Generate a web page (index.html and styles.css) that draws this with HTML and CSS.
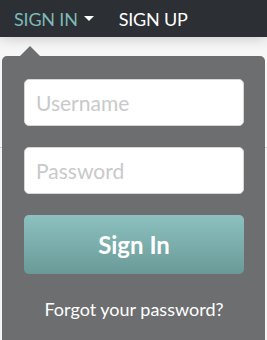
FILE: index.html
```html
<!DOCTYPE html>
<html lang="en">
<head>
  <meta charset="UTF-8">
  <meta name="viewport" content="width=device-width, initial-scale=1.0">
  <title>Sign In</title>
  <link rel="stylesheet" href="styles.css">
</head>
<body>
  <!-- Top bar -->
  <nav class="topbar">
    <a class="nav-link active" href="#">SIGN IN <span class="caret"></span></a>
    <a class="nav-link" href="#">SIGN UP</a>
  </nav>

  <!-- Page behind the dropdown -->
  <div class="page"></div>

  <!-- Sign in dropdown -->
  <div class="dropdown">
    <form class="login-form">
      <input type="text" placeholder="Username">
      <input type="password" placeholder="Password">
      <button type="button">Sign In</button>
    </form>
    <a class="forgot" href="#">Forgot your password?</a>
  </div>
</body>
</html>
```

FILE: styles.css
```css
body {
  margin: 0;
  padding: 0;
  background: #f4f4f4;
  font-family: 'Lato', 'Open Sans', sans-serif;
  height: 340px;
  overflow: hidden;
  position: relative;
}

/* Top bar */
.topbar {
  display: flex;
  align-items: center;
  height: 37px;
  padding-left: 14px;
  gap: 25px;
  background: #2c2f33;
  position: relative;
  z-index: 2;
  box-shadow: 0 2px 14px rgba(0, 0, 0, 0.18);
}
.nav-link {
  color: #fff;
  text-decoration: none;
  font-size: 18px;
  letter-spacing: -0.2px;
  display: flex;
  align-items: center;
}
.nav-link.active {
  color: #7db9b7;
}
.caret {
  display: inline-block;
  margin-left: 6px;
  border-left: 5px solid transparent;
  border-right: 5px solid transparent;
  border-top: 5px solid #fff;
}

/* Page */
.page {
  height: 110px;
  border-bottom: 1px solid #cfcfcf;
  background: #f7f7f7;
}

/* Dropdown */
.dropdown {
  position: absolute;
  top: 56px;
  left: 2px;
  right: 2px;
  bottom: 0;
  background: #6d6e70;
  border-radius: 5px 5px 0 0;
  padding: 23px 21px 0 22px;
  z-index: 3;
}
.dropdown::before {
  content: "";
  position: absolute;
  top: -10px;
  left: 18px;
  border-left: 10px solid transparent;
  border-right: 10px solid transparent;
  border-bottom: 10px solid #6d6e70;
}
.login-form {
  display: flex;
  flex-direction: column;
  gap: 21px;
}
.login-form input {
  height: 47px;
  box-sizing: border-box;
  border: 1px solid #d6d6d6;
  border-radius: 5px;
  padding: 0 11px;
  font-family: 'Lato', sans-serif;
  font-size: 21px;
  color: #555;
  background: #fff;
}
.login-form input::placeholder {
  color: #c9c9cb;
}
.login-form button {
  height: 59px;
  border: none;
  border-radius: 5px;
  background: linear-gradient(#8cc1bf, #6a9a98);
  color: #fff;
  font-family: 'Lato', sans-serif;
  font-weight: bold;
  font-size: 24px;
  cursor: pointer;
}
.forgot {
  display: block;
  text-align: center;
  margin-top: 24px;
  color: #fff;
  text-decoration: none;
  font-size: 18px;
}
```
